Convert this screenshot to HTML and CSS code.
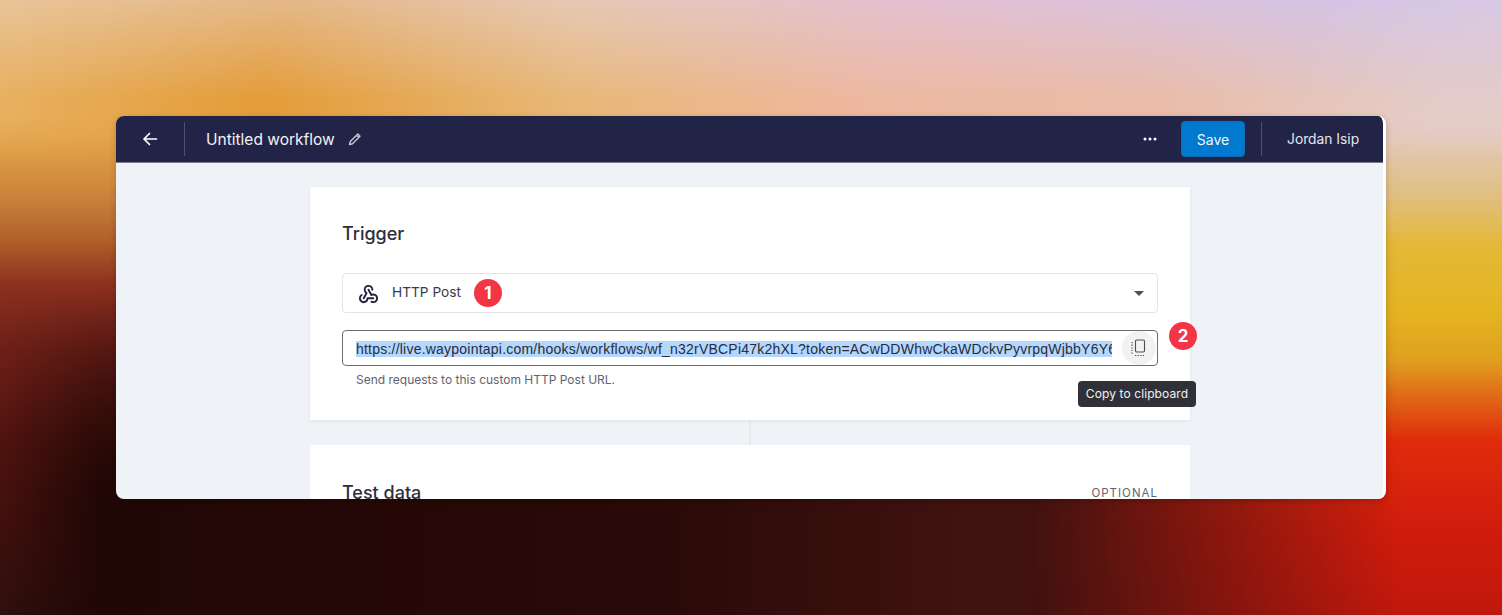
FILE: index.html
```html
<!DOCTYPE html>
<html lang="en">
<head>
<meta charset="utf-8">
<title>Untitled workflow</title>
<link rel="stylesheet" href="styles.css">
</head>
<body>
<div class="desktop">
  <div class="wash wash-dark"></div>
  <div class="wash wash-right"></div>
  <div class="wash wash-low"></div>
  <div class="wash wash-high"></div>
  <div class="window">
    <header class="topbar">
      <button class="back" aria-label="Back">
        <svg width="16" height="16" viewBox="0 0 16 16" fill="none" stroke="#fff" stroke-width="1.7" stroke-linecap="round" stroke-linejoin="round"><path d="M14.5 8H2M7.5 2.5 2 8l5.500 5.500"/></svg>
      </button>
      <h1 class="title">Untitled workflow</h1>
      <svg class="pencil" width="14" height="14" viewBox="0 0 14 14" fill="none" stroke="#c4c6d0" stroke-width="1.400" stroke-linejoin="round"><path d="M1.500 12.500 2.300 9.500 9.800 2 12 4.200 4.500 11.700ZM8.500 3.300 10.700 5.500"/></svg>
      <div class="spacer"></div>
      <svg class="dots" width="14" height="4" viewBox="0 0 14 4" fill="#fff"><circle cx="2" cy="2" r="1.500"/><circle cx="7" cy="2" r="1.500"/><circle cx="12" cy="2" r="1.500"/></svg>
      <button class="save">Save</button>
      <div class="user">Jordan Isip</div>
    </header>
    <main class="content">
      <section class="card trigger">
        <h2 class="card-title">Trigger</h2>
        <div class="select">
          <svg class="hook" width="23" height="23" viewBox="0 0 24 24" fill="none" stroke="#23233f" stroke-width="2" stroke-linecap="round" stroke-linejoin="round"><path d="M4.876 13.61a4 4 0 1 0 6.124 3.39h6"/><path d="M15.066 20.502a4 4 0 1 0 1.934 -7.502c-.706 0 -1.424 .179 -2 .5l-3 -5.5"/><path d="M16 8a4 4 0 1 0 -8 0c0 1.506 .77 2.818 2 3.5l-3 5.5"/></svg>
          <span class="select-label">HTTP Post</span>
          <span class="badge">1</span>
          <span class="caret"></span>
        </div>
        <div class="url-field">
          <div class="url-clip"><span class="url-text">https://live.waypointapi.com/hooks/workflows/wf_n32rVBCPi47k2hXL?token=ACwDDWhwCkaWDckvPyvrpqWjbbY6Y6tQ</span></div>
          <button class="copy" aria-label="Copy">
            <svg class="copy-icon" width="16" height="18" viewBox="0 0 16 18" fill="none" stroke="#4b4d59" stroke-width="1.100"><rect x="5.500" y="1" width="9" height="12" rx="1.200"/><path d="M2 3v12M5 16.500h9" stroke-dasharray="1.300 1.300"/></svg>
          </button>
          <span class="badge badge-two">2</span>
          <span class="tooltip">Copy to clipboard</span>
        </div>
        <p class="hint">Send requests to this custom HTTP Post URL.</p>
      </section>
      <div class="connector"></div>
      <section class="card test">
        <h2 class="card-title">Test data</h2>
        <span class="optional">OPTIONAL</span>
      </section>
    </main>
  </div>
</div>
</body>
</html>
```
FILE: styles.css
```css
* { box-sizing: border-box; }
html, body { margin: 0; height: 100%; overflow: hidden; }
body { font-family: Inter, "Liberation Sans", sans-serif; }

.desktop {
  position: relative;
  width: 1502px;
  height: 615px;
  padding: 116px;
  overflow: hidden;
  background: linear-gradient(180deg, #e8c490 0, #e8b870 60px, #e4a64c 118px, #dc9a42 157px, #c8803a 200px, #b0602a 240px, #8c3020 285px, #6e2018 350px, #501410 440px, #40100e 530px, #30100e 100%);
}

/* Decorative colour washes that build the wallpaper behind the window */
.wash { position: absolute; left: 0; width: 100%; }
.wash-dark {
  top: 290px;
  height: 325px;
  background: linear-gradient(90deg, rgba(32,7,5,0) 0, #200705 100px, #2a0a08 670px, #401210 960px, #401210 100%);
  -webkit-mask-image: linear-gradient(180deg, transparent 0, #000 200px);
  mask-image: linear-gradient(180deg, transparent 0, #000 200px);
}
.wash-right {
  top: 0;
  height: 615px;
  background: linear-gradient(180deg, #d4c8e6 0, #e0cce0 59px, #e4ccc8 118px, #e0c088 190px, #e4b838 245px, #e4b420 314px, #e0a020 360px, #e07018 392px, #e02c0c 440px, #d01c0c 529px, #c0180c 100%);
  -webkit-mask-image: linear-gradient(90deg, transparent 1030px, #000 1400px);
  mask-image: linear-gradient(90deg, transparent 1030px, #000 1400px);
}
.wash-low {
  top: 0;
  height: 160px;
  background: linear-gradient(90deg, #e8b060 0, #e49c38 265px, #e8b878 575px, #eeb8a0 860px, #eabca8 1150px, #e4ccc8 1440px, #e4ccc8 100%);
  -webkit-mask-image: linear-gradient(180deg, #000 112px, transparent 160px);
  mask-image: linear-gradient(180deg, #000 112px, transparent 160px);
}
.wash-high {
  top: 0;
  height: 100px;
  background: linear-gradient(90deg, #e8c498 0, #e4b888 290px, #e6c8b4 575px, #e4c0d0 900px, #d4c4e4 1320px, #d8c8e4 100%);
  -webkit-mask-image: linear-gradient(180deg, #000 0, transparent 100px);
  mask-image: linear-gradient(180deg, #000 0, transparent 100px);
}

.window {
  position: relative;
  width: 1270px;
  height: 383px;
  border-radius: 8px;
  overflow: hidden;
  background: #eff2f6;
  border-right: 3px solid #fff;
  box-shadow: 0 2px 6px rgba(0, 0, 0, .2);
  display: flex;
  flex-direction: column;
}

.topbar {
  flex: none;
  height: 47px;
  background: #222447;
  border-bottom: 1px solid #777a90;
  display: flex;
  align-items: center;
  color: #fff;
}
.back {
  width: 69px;
  height: 34px;
  padding: 0;
  background: none;
  border: 0;
  border-right: 1px solid #4e5069;
  display: flex;
  align-items: center;
  justify-content: center;
}
.title { margin: 1px 0 0 21px; font-size: 15.500px; font-weight: 400; line-height: 24px; color: #f2f2f5; }
.pencil { margin-left: 13px; }
.spacer { flex: 1; }
.dots { margin-right: 24px; }
.save {
  width: 64px;
  height: 36px;
  padding: 0;
  border: 1px solid #0f6cb8;
  border-radius: 4px;
  background: #0079cf;
  color: #f2f7fb;
  font: 400 14px Inter, "Liberation Sans", sans-serif;
  margin-right: 16px;
}
.user {
  height: 34px;
  width: 122px;
  border-left: 1px solid #4e5069;
  padding-left: 25px;
  font-size: 13.800px;
  line-height: 34px;
  color: #e6e6ec;
}

.content {
  flex: 1;
  min-height: 0;
  overflow: hidden;
  display: flex;
  flex-direction: column;
  align-items: center;
  padding-top: 24px;
  padding-left: 1px;
}
.card {
  flex: none;
  width: 880px;
  background: #fff;
  padding: 33px 32px 32px;
  position: relative;
}
.trigger { height: 233px; box-shadow: 0 1px 3px rgba(30, 30, 60, .08); }
.card-title {
  margin: 0;
  font-size: 18px;
  font-weight: 500;
  line-height: 28px;
  color: #2d2e3a;
}
.connector { flex: none; width: 2px; height: 25px; background: #e6e8ec; }

.select {
  margin-top: 25px;
  height: 40px;
  border: 1px solid #e3e5ea;
  border-radius: 4px;
  display: flex;
  align-items: center;
  padding: 0 14px;
}
.hook { flex: none; }
.select-label { margin: -2px 0 0 12px; font-size: 13.700px; color: #3a3b47; }
.badge {
  width: 28px;
  height: 28px;
  border-radius: 50%;
  background: #f43545;
  color: #fff;
  font-size: 17px;
  font-weight: 700;
  line-height: 28px;
  text-align: center;
  margin-left: 13px;
  flex: none;
}
.caret {
  margin-left: auto;
  width: 0;
  height: 0;
  border-left: 5px solid transparent;
  border-right: 5px solid transparent;
  border-top: 5px solid #4d4f5b;
  margin-right: -1px;
}

.url-field {
  margin-top: 17px;
  height: 36px;
  border: 1px solid #6d6e78;
  border-radius: 4px;
  display: flex;
  align-items: center;
  position: relative;
  padding-left: 13px;
}
.url-clip { width: 756px; overflow: hidden; white-space: nowrap; flex: none; }
.url-text { background: #b3d7fe; color: #2a2b38; font-family: "Liberation Sans", Arial, sans-serif; font-size: 14px; letter-spacing: .22px; line-height: 17px; }
.copy {
  position: absolute;
  right: 1px;
  top: 0;
  width: 34px;
  height: 34px;
  padding: 0;
  border: 0;
  border-radius: 50%;
  background: #f2f2f3;
  display: flex;
  align-items: center;
  justify-content: center;
}
.copy-icon { margin-right: 3px; }
.badge-two { position: absolute; right: -40px; top: -9px; margin: 0; }
.tooltip {
  position: absolute;
  left: 735px;
  top: 50px;
  width: 118px;
  height: 26px;
  border-radius: 4px;
  background: #2f3038;
  color: #f0f0f2;
  font-size: 12px;
  letter-spacing: .1px;
  line-height: 25px;
  text-align: center;
  white-space: nowrap;
}
.hint { margin: 6px 0 0 14px; font-size: 12px; line-height: 16px; color: #62636f; }

.test { flex: 1 0 100px; }
.test .card-title { margin-top: 1px; }
.optional {
  position: absolute;
  right: 32px;
  top: 41px;
  font-size: 11.500px;
  letter-spacing: 1px;
  color: #62636f;
}
```
